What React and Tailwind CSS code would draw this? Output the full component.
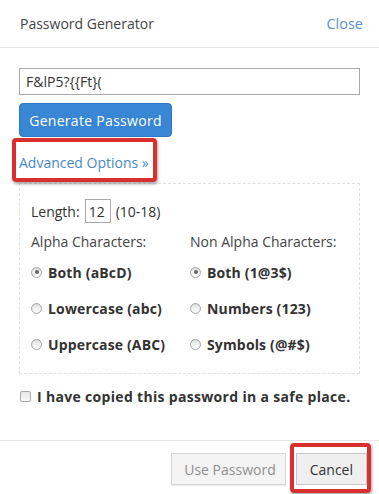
import React from "react";

function Radio({ checked }) {
  return (
    <span className="relative inline-block w-[11px] h-[11px] rounded-full border border-[#a9a9a9] bg-gradient-to-b from-[#e6e6e6] to-[#fafafa] shrink-0 shadow-[inset_0_1px_1px_rgba(0,0,0,0.08)]">
      {checked && (
        <span className="absolute left-[2.5px] top-[2.5px] w-[4px] h-[4px] rounded-full bg-[#666]" />
      )}
    </span>
  );
}

function RadioRow({ checked, label }) {
  return (
    <div className="flex items-center h-[36px] gap-[6px]">
      <Radio checked={checked} />
      <span className="text-[14px] font-bold text-[#333] tracking-[0.15px]">{label}</span>
    </div>
  );
}

export default function App() {
  return (
    <div className="w-[379px] h-[494px] bg-white overflow-hidden font-['Open_Sans',sans-serif] text-[#333]">
      <div className="h-[48px] border-b border-[#e5e5e5] flex items-center justify-between pl-[20px] pr-[16px]">
        <span className="text-[14px] text-[#444]">Password Generator</span>
        <span className="text-[14.5px] text-[#5b92c9]">Close</span>
      </div>
      <div className="px-[19px] pt-[20px]">
        <div className="h-[27px] border border-[#a9a9a9] flex items-center px-[6px] text-[14px] text-[#333]">
          F&amp;lP5?&#123;&#123;Ft&#125;(
        </div>
        <div className="mt-[8px] w-[153px] h-[34px] rounded-[4px] bg-[#3886d4] border border-[#2f78c0] flex items-center justify-center text-white text-[14px] tracking-[0.3px]">
          Generate Password
        </div>
        <div className="relative mt-[16px] h-[20px] flex items-center">
          <span className="text-[14px] text-[#4a88c5] leading-[20px]">Advanced Options »</span>
          <div className="absolute left-[-7px] top-[-15px] w-[145px] h-[44px] border-[4px] border-[#d8302f] rounded-[4px] shadow-[1px_2px_3px_rgba(0,0,0,0.35)]" />
        </div>
        <div className="mt-[10px] border border-dashed border-[#e0e0e0] pl-[11px] pt-[15px] pb-[11px]">
          <div className="flex items-center h-[24px] text-[14px] text-[#333]">
            <span>Length:</span>
            <span className="ml-[5px] w-[26px] h-[24px] border border-[#a9a9a9] flex items-center pl-[3px]">12</span>
            <span className="ml-[5px]">(10-18)</span>
          </div>
          <div className="mt-[9px] grid grid-cols-[159px_1fr]">
            <div>
              <div className="text-[14px] leading-[20px] text-[#444]">Alpha Characters:</div>
              <div className="mt-[2px]">
                <RadioRow checked label="Both (aBcD)" />
                <RadioRow label="Lowercase (abc)" />
                <RadioRow label="Uppercase (ABC)" />
              </div>
            </div>
            <div>
              <div className="text-[14px] leading-[20px] text-[#444]">Non Alpha Characters:</div>
              <div className="mt-[2px]">
                <RadioRow checked label="Both (1@3$)" />
                <RadioRow label="Numbers (123)" />
                <RadioRow label="Symbols (@#$)" />
              </div>
            </div>
          </div>
        </div>
        <div className="mt-[12px] h-[20px] flex items-center gap-[6px] pl-[1px]">
          <span className="w-[11px] h-[11px] rounded-[2px] border border-[#a9a9a9] bg-gradient-to-b from-[#e6e6e6] to-[#fafafa]" />
          <span className="text-[14px] font-bold text-[#333] tracking-[0.32px]">I have copied this password in a safe place.</span>
        </div>
      </div>
      <div className="mt-[34px] border-t border-[#e5e5e5] flex justify-end pr-[12px] pt-[12px] gap-[10px]">
        <div className="h-[32px] pl-[12px] pr-[9px] border border-[#d6d6d6] bg-[#f4f4f4] flex items-center text-[14px] text-[#8f8f8f] shadow-[0_1px_1px_rgba(0,0,0,0.08)]">
          Use Password
        </div>
        <div className="relative h-[32px] px-[13px] border border-[#c8c8c8] bg-[#efefef] flex items-center text-[14px] text-[#333]">
          Cancel
          <div className="absolute left-[-7px] top-[-11px] w-[81px] h-[50px] border-[4px] border-[#d8302f] rounded-[4px] shadow-[1px_2px_3px_rgba(0,0,0,0.35)]" />
        </div>
      </div>
    </div>
  );
}
